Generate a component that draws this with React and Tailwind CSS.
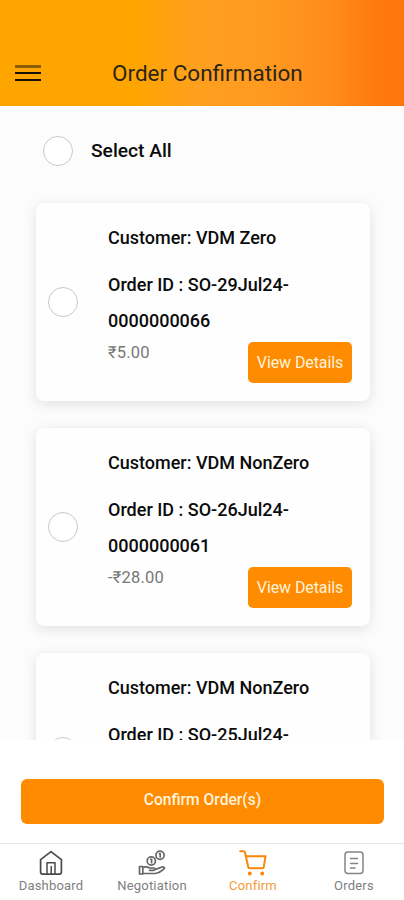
import { useState } from 'react';

const orders = [
  { id: 'SO-29Jul24-0000000066', customer: 'VDM Zero', amount: '₹5.00' },
  { id: 'SO-26Jul24-0000000061', customer: 'VDM NonZero', amount: '-₹28.00' },
  { id: 'SO-25Jul24-', customer: 'VDM NonZero', amount: '' },
];

const HomeIcon = () => (
  <svg width="24" height="26" viewBox="0 0 24 26" fill="none" stroke="#4a4a4a" strokeWidth="1.7" strokeLinejoin="round">
    <path d="M1.600 9.600 12 1.600l10.400 8V22a2.200 2.200 0 0 1-2.200 2.200H3.800A2.200 2.200 0 0 1 1.600 22z" />
    <path d="M8 24V12.800h8V24M12.200 16v8" strokeWidth="1.500" />
  </svg>
);

const NegotiationIcon = () => (
  <svg width="28" height="26" viewBox="0 0 28 26" fill="none" stroke="#666" strokeWidth="1.700" strokeLinecap="round" strokeLinejoin="round">
    <circle cx="22" cy="5.300" r="4.100" />
    <circle cx="13.300" cy="11" r="4.100" />
    <path d="M21.400 3.600h.8v3.400M12.800 9.300h.8v3.400" />
    <path d="M1.500 16.500h3.300v7.500H1.500zM4.800 17.600c2.500-1.200 4.800-.9 6.600.4h4.200c1.800 0 1.800 2.200 0 2.300h-4M16.800 19.600l6.400-2.400c2-.8 4 .3 3 1.500-2.400 2.300-6 4.600-9.200 4.800H4.800" />
  </svg>
);

const CartIcon = () => (
  <svg width="28" height="26" viewBox="0 0 28 26" fill="none" stroke="#fb8607" strokeWidth="2" strokeLinecap="round" strokeLinejoin="round">
    <path d="M1.200 1.200h3.400c.7 0 1.100.4 1.300 1.100l3.300 14.500c.2 1 .8 1.500 1.700 1.500h12.300c.9 0 1.500-.5 1.600-1.400l1.700-10.700H7" />
    <circle cx="10.800" cy="23.500" r="1.900" fill="#fb8607" stroke="none" />
    <circle cx="23.200" cy="23.500" r="1.900" fill="#fb8607" stroke="none" />
  </svg>
);

const OrdersIcon = () => (
  <svg width="20" height="24" viewBox="0 0 20 24" fill="none" stroke="#858585" strokeWidth="1.500" strokeLinecap="round">
    <rect x="1" y="1" width="18" height="21.600" rx="3" />
    <path d="M6.500 7.600h7M6.500 12.400h7M6.500 17h4.500" />
  </svg>
);

const tabs = [
  { label: 'Dashboard', Icon: HomeIcon },
  { label: 'Negotiation', Icon: NegotiationIcon },
  { label: 'Confirm', Icon: CartIcon },
  { label: 'Orders', Icon: OrdersIcon },
];

const RadioCircle = ({ checked, onClick, label }) => (
  <button
    type="button"
    role="checkbox"
    aria-checked={checked}
    aria-label={label}
    onClick={onClick}
    className={`size-[30px] shrink-0 rounded-full border border-[#c8c8c8] ${checked ? 'bg-[#ff8b00]' : 'bg-white'}`}
  />
);

const OrderCard = ({ order, checked, onToggle }) => (
  <article className="flex h-[198px] shrink-0 items-center rounded-lg bg-[#fefefe] pr-[18px] pl-3 shadow-[0_3px_14px_rgba(0,0,0,0.11)]">
    <RadioCircle checked={checked} onClick={onToggle} label={order.id} />
    <div className="ml-[30px] flex h-full flex-1 flex-col pt-[17px]">
      <h2 className="text-lg leading-9 font-medium whitespace-nowrap">{`Customer: ${order.customer}`}</h2>
      <p className="mt-[11px] h-[72px] w-[200px] text-lg leading-9 font-medium">{`Order ID : ${order.id}`}</p>
      <div className="flex items-start justify-between">
        <span className="pt-1 text-[16.500px] leading-5 tracking-[0.2px] text-[#777]">{order.amount}</span>
        <button
          type="button"
          className="mt-[3px] h-[41px] w-[104px] rounded-[5px] bg-[#ff8b00] text-base tracking-[-0.1px] whitespace-nowrap text-[#fff3dc]"
        >
          View Details
        </button>
      </div>
    </div>
  </article>
);

const App = () => {
  const [selected, setSelected] = useState([]);
  const [activeTab, setActiveTab] = useState('Confirm');
  const allSelected = selected.length === orders.length;

  const toggleOrder = id => {
    setSelected(selected.includes(id) ? selected.filter(item => item !== id) : [...selected, id]);
  };

  const toggleAll = () => {
    setSelected(allSelected ? [] : orders.map(order => order.id));
  };

  return (
    <div className="flex h-[900px] w-full flex-col overflow-hidden bg-white font-[Roboto,sans-serif] text-[#0b0b0b]">
      {/* Header */}
      <header className="flex h-[106px] shrink-0 items-end bg-[linear-gradient(90deg,#ffa500_0%,#ffa500_33%,#ffa01e_48%,#ff9a20_65%,#ff8b1b_82%,#ff7a0c_93%,#ff750a_100%)] pb-[15px] pl-[15px]">
        <button type="button" aria-label="Menu" className="mb-2.5 flex w-[26px] flex-col">
          <span className="mb-1 h-[3px] w-full bg-[#8a5c08]" />
          <span className="mb-[5px] h-0.5 w-full bg-[#17120a]" />
          <span className="h-0.5 w-full bg-[#17120a]" />
        </button>
        <h1 className="ml-[71px] text-[22.500px] leading-9 whitespace-nowrap text-[#2c2415]">Order Confirmation</h1>
      </header>

      {/* Order list */}
      <main className="flex h-[634px] shrink-0 flex-col overflow-hidden bg-[#fcfcfc] px-9 pt-[30px]">
        <div className="flex shrink-0 items-center gap-[18px] pl-[7px]">
          <RadioCircle checked={allSelected} onClick={toggleAll} label="Select All" />
          <span className="text-[19.200px] leading-7 font-medium">Select All</span>
        </div>
        <div className="mt-[37px] -mr-0.5 flex flex-col gap-[27px]">
          {orders.map(order => (
            <OrderCard
              key={order.id}
              order={order}
              checked={selected.includes(order.id)}
              onToggle={() => toggleOrder(order.id)}
            />
          ))}
        </div>
      </main>

      <div className="h-[103px] shrink-0 pt-[39px] pr-5 pl-[21px]">
        <button type="button" className="h-[45px] w-full rounded-md bg-[#ff8b00] pb-px text-[15.600px] font-medium text-[#fff3dc]">
          Confirm Order(s)
        </button>
      </div>

      {/* Bottom tabs */}
      <nav className="grid flex-1 grid-cols-4 border-t border-[#e8e8e8]">
        {tabs.map(({ label, Icon }) => (
          <button
            key={label}
            type="button"
            onClick={() => setActiveTab(label)}
            className={`flex flex-col items-center pl-px text-[13px] leading-4 tracking-[0.2px] ${activeTab === label ? 'text-[#f39a38]' : 'text-[#808080]'}`}
          >
            <span className="flex h-[34px] items-center pt-1">
              <Icon />
            </span>
            {label}
          </button>
        ))}
      </nav>
    </div>
  );
};

export default App;
